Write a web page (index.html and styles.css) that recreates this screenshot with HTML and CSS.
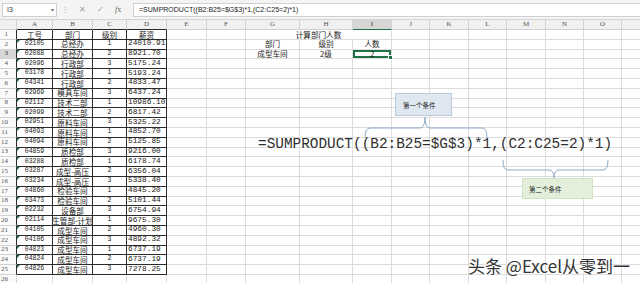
FILE: index.html
```html
<!DOCTYPE html>
<html lang="zh">
<head>
    <meta charset="UTF-8">
    <meta name="viewport" content="width=device-width, initial-scale=1.0">
    <title>SUMPRODUCT 多条件计数</title>
    <link rel="stylesheet" href="styles.css">
</head>
<body>
    <div class="formula-bar">
        <div class="name-box"><span>I3</span><span class="caret">&#9662;</span></div>
        <div class="bar-dots">&#8942;</div>
        <div class="bar-icons">
            <span>&#10005;</span>
            <span>&#10003;</span>
            <span class="fx"><i>f</i>x</span>
        </div>
        <div class="formula-input">=SUMPRODUCT((B2:B25=$G$3)*1,(C2:C25=2)*1)</div>
    </div>

    <div class="sheet">
        <div id="grid" class="grid"></div>

        <!-- braces linking the callouts to the formula -->
        <svg class="braces" width="640" height="263" viewBox="0 20 640 263">
            <path d="M365 138 Q365 128 370 128 L420 128 Q425 128 425 117 Q425 128 430 128 L482 128 Q487 128 487 138" />
            <path d="M503 160 Q503 170 508 170 L549 170 Q554 170 554 178 Q554 170 559 170 L603 170 Q608 170 608 160" />
        </svg>

        <div class="formula-text">=SUMPRODUCT((B2:B25=$G$3)*1,(C2:C25=2)*1)</div>
        <div class="callout callout-one">第一个条件</div>
        <div class="callout callout-two">第二个条件</div>
        <div class="watermark">头条 @Excel从零到一</div>
    </div>

    <script>
        // last column is only partly on screen, so its letter is not shown
        const letters = ['', 'A', 'B', 'C', 'D', 'E', 'F', 'G', 'H', 'I', 'J', 'K', 'L', 'M', 'N', 'O', ''];
        const rows = [
            ['工号', '部门', '级别', '薪资'],
            ['02105', '总经办', '1', '24010.91'],
            ['02088', '总经办', '2', '8921.70'],
            ['02096', '行政部', '3', '5175.24'],
            ['03178', '行政部', '1', '5193.24'],
            ['04341', '行政部', '2', '4833.47'],
            ['02969', '模具车间', '3', '6437.24'],
            ['02112', '技术二部', '1', '10986.10'],
            ['02099', '技术二部', '2', '6817.42'],
            ['02951', '原料车间', '3', '5325.22'],
            ['04093', '原料车间', '1', '4852.70'],
            ['04094', '原料车间', '2', '5125.85'],
            ['04859', '质检部', '3', '9216.00'],
            ['03288', '质检部', '1', '6178.74'],
            ['03287', '成型-高压', '2', '6356.04'],
            ['03234', '成型-高压', '3', '5338.40'],
            ['04860', '检验车间', '1', '4845.20'],
            ['03473', '检验车间', '2', '5101.44'],
            ['02232', '设备部', '3', '6754.94'],
            ['02114', '生管部-计划', '1', '9675.30'],
            ['04105', '成型车间', '2', '4960.30'],
            ['04106', '成型车间', '3', '4892.32'],
            ['04823', '成型车间', '1', '6737.19'],
            ['04824', '成型车间', '2', '6737.19'],
            ['04826', '成型车间', '3', '7278.25']
        ];
        // the little lookup block in G1:I3
        const side = {
            1: { G: '计算部门人数' },
            2: { G: '部门', H: '级别', I: '人数' },
            3: { G: '成型车间', H: '2级', I: '2' }
        };

        const grid = document.getElementById('grid');

        function addCell(text, classes) {
            const cell = document.createElement('div');
            cell.className = 'cell ' + classes;
            if (text !== '') {
                const span = document.createElement('span');
                span.textContent = text;
                cell.appendChild(span);
            }
            grid.appendChild(cell);
            return cell;
        }

        // column header row
        letters.forEach((letter, i) => {
            let cls = i === 0 ? 'corner' : 'col-hdr';
            if (i >= 1 && i <= 4) cls += ' box-top';
            if (letter === 'I') cls += ' hdr-active';
            addCell(letter, cls);
        });

        for (let r = 1; r <= 26; r++) {
            let hdr = 'row-hdr';
            if (r <= 25) hdr += ' box-left';
            if (r === 3) hdr += ' hdr-active';
            addCell(String(r), hdr);

            for (let c = 1; c < letters.length; c++) {
                const col = letters[c];
                if (r === 1 && (col === 'H' || col === 'I')) continue;

                let text = '';
                let cls = '';
                if (c <= 4 && r <= 25) {
                    text = rows[r - 1][c - 1];
                    cls = 'boxed';
                    if (r > 1 && c === 1) cls += ' code flag';
                    else if (r > 1 && c === 3) cls += ' code';
                    else if (r > 1 && c === 4) cls += ' money';
                }
                if (side[r] && side[r][col]) text = side[r][col];
                if (r === 1 && col === 'G') cls += ' merged';
                if (r === 3 && col === 'I') cls += ' active';

                addCell(text, cls);
            }
        }
    </script>
</body>
</html>
```

FILE: styles.css
```css
* {
    margin: 0;
    padding: 0;
    box-sizing: border-box;
}
body {
    width: 640px;
    height: 283px;
    overflow: hidden;
    background-color: #fff;
    font-family: "Liberation Sans", sans-serif;
}

/* formula bar */
.formula-bar {
    display: flex;
    align-items: center;
    height: 20px;
    padding-left: 2px;
    background-color: #f4f4f4;
    border-bottom: 1px solid #d4d4d4;
}
.name-box {
    width: 55px;
    height: 14px;
    display: flex;
    align-items: center;
    justify-content: space-between;
    padding: 0 2px 0 4px;
    background-color: #fff;
    border: 1px solid #d0d0d0;
    font-size: 7px;
    color: #333;
}
.caret {
    font-size: 6px;
    color: #777;
}
.bar-dots {
    width: 16px;
    text-align: center;
    font-size: 8px;
    color: #b8b8b8;
}
.bar-icons {
    width: 60px;
    display: flex;
    gap: 11px;
    padding-left: 6px;
    font-size: 8px;
    color: #a0a0a0;
}
.fx {
    font-family: "Liberation Serif", serif;
    color: #666;
}
.formula-input {
    flex: 1;
    height: 14px;
    padding-left: 5px;
    background-color: #fff;
    border: 1px solid #d0d0d0;
    border-right: none;
    font-size: 7px;
    line-height: 12px;
    color: #222;
}

/* worksheet */
.sheet {
    position: relative;
    height: 263px;
    overflow: hidden;
}
.grid {
    display: grid;
    grid-template-columns: 17px 36px 40px 34px 40px 40px 39px 54px 53px 39px 38px 39px 38px 39px 38px 38px 40px;
    grid-template-rows: 10px repeat(26, 9.8px);
}
.cell {
    display: flex;
    align-items: center;
    justify-content: center;
    overflow: hidden;
    white-space: nowrap;
    border-right: 1px solid #dcdcdc;
    border-bottom: 1px solid #dcdcdc;
    font-family: "Noto Sans CJK SC", sans-serif;
    font-size: 7.6px;
    line-height: 1;
    color: #1a1a1a;
}
.cell span {
    flex-shrink: 0;
}
.corner,
.col-hdr,
.row-hdr {
    background-color: #f0f0f0;
    border-color: #d2d2d2;
    font-family: "Liberation Serif", serif;
    font-size: 7px;
    color: #555;
}
.row-hdr {
    justify-content: flex-end;
    padding-right: 8px;
    background-color: #fafafa;
}
.hdr-active {
    background-color: #d6d6d6;
    color: #333;
}
.col-hdr.hdr-active {
    border-bottom: 1px solid #217346;
}
.boxed {
    border-right-color: #2a2a2a;
    border-bottom-color: #2a2a2a;
}
.box-top {
    border-bottom-color: #2a2a2a;
}
.box-left {
    border-right-color: #2a2a2a;
}
.code {
    font-family: "Liberation Mono", monospace;
    font-size: 6.5px;
}
.money {
    justify-content: flex-start;
    padding-left: 1px;
    font-family: "Liberation Mono", monospace;
    font-size: 7.8px;
}
.flag {
    position: relative;
}
.flag::before {
    content: "";
    position: absolute;
    top: 0;
    left: 0;
    border-top: 3px solid #217346;
    border-right: 3px solid transparent;
}
.merged {
    grid-column: span 3;
}
.active {
    position: relative;
    overflow: visible;
    box-shadow: inset 0 0 0 2px #217346;
}
.active::after {
    content: "";
    position: absolute;
    right: -2px;
    bottom: -2px;
    width: 3px;
    height: 3px;
    background-color: #217346;
    border: 1px solid #fff;
}

/* annotations drawn over the sheet */
.braces {
    position: absolute;
    top: 0;
    left: 0;
    fill: none;
    stroke: #8fa9c9;
    stroke-width: 1;
}
.formula-text {
    position: absolute;
    left: 258px;
    top: 117px;
    font-family: "Liberation Mono", monospace;
    font-size: 14.4px;
    line-height: 14.4px;
    color: #2e2e2e;
}
.callout {
    position: absolute;
    display: flex;
    align-items: center;
    padding-left: 7px;
    font-family: "Noto Sans CJK SC", sans-serif;
    font-size: 6.5px;
    color: #222;
}
.callout-one {
    left: 395px;
    top: 73px;
    width: 57px;
    height: 23px;
    background-color: #dfe7f0;
    border: 1px solid #b9c9dc;
}
.callout-two {
    left: 522px;
    top: 158px;
    width: 71px;
    height: 21px;
    padding-left: 6px;
    background-color: #e3efdb;
    border: 1px solid #cfe2c3;
}
.watermark {
    position: absolute;
    left: 468px;
    top: 233px;
    font-family: "Noto Sans CJK SC", sans-serif;
    font-size: 17px;
    color: #333;
    text-shadow: 0 0 2px #fff, 0 0 2px #fff;
}
```
